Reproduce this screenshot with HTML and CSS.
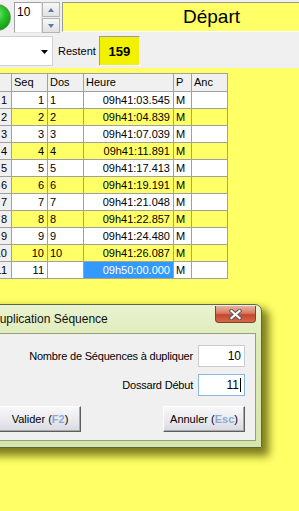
FILE: index.html
```html
<!DOCTYPE html>
<html lang="fr">
<head>
  <meta charset="UTF-8">
  <title>Départ</title>
  <link rel="stylesheet" href="styles.css">
</head>
<body>
  <div class="toolbar">
    <div class="row-top">
      <div class="ball"></div>
      <div class="spin-value">10</div>
      <div class="spin-btns">
        <span class="spin-btn"><svg width="6" height="4" viewBox="0 0 6 4"><polygon points="0,4 3,0 6,4" fill="#5b78a8"/></svg></span>
        <span class="spin-btn"><svg width="6" height="4" viewBox="0 0 6 4"><polygon points="0,0 6,0 3,4" fill="#5b78a8"/></svg></span>
      </div>
      <div class="title-box">Départ</div>
    </div>
    <div class="row-bottom">
      <div class="combo"><svg width="7" height="4" viewBox="0 0 7 4"><polygon points="0,0 7,0 3.5,4" fill="#000"/></svg></div>
      <span class="restent">Restent</span>
      <div class="count">159</div>
    </div>
  </div>

  <div class="panel">
    <div class="grid">
      <div class="cell head"></div>
      <div class="cell head">Seq</div>
      <div class="cell head">Dos</div>
      <div class="cell head">Heure</div>
      <div class="cell head">P</div>
      <div class="cell head">Anc</div>

      <div class="cell rowhead">1</div><div class="cell num">1</div><div class="cell">1</div><div class="cell num">09h41:03.545</div><div class="cell">M</div><div class="cell"></div>
      <div class="cell rowhead">2</div><div class="cell num alt">2</div><div class="cell alt">2</div><div class="cell num alt">09h41:04.839</div><div class="cell alt">M</div><div class="cell alt"></div>
      <div class="cell rowhead">3</div><div class="cell num">3</div><div class="cell">3</div><div class="cell num">09h41:07.039</div><div class="cell">M</div><div class="cell"></div>
      <div class="cell rowhead">4</div><div class="cell num alt">4</div><div class="cell alt">4</div><div class="cell num alt">09h41:11.891</div><div class="cell alt">M</div><div class="cell alt"></div>
      <div class="cell rowhead">5</div><div class="cell num">5</div><div class="cell">5</div><div class="cell num">09h41:17.413</div><div class="cell">M</div><div class="cell"></div>
      <div class="cell rowhead">6</div><div class="cell num alt">6</div><div class="cell alt">6</div><div class="cell num alt">09h41:19.191</div><div class="cell alt">M</div><div class="cell alt"></div>
      <div class="cell rowhead">7</div><div class="cell num">7</div><div class="cell">7</div><div class="cell num">09h41:21.048</div><div class="cell">M</div><div class="cell"></div>
      <div class="cell rowhead">8</div><div class="cell num alt">8</div><div class="cell alt">8</div><div class="cell num alt">09h41:22.857</div><div class="cell alt">M</div><div class="cell alt"></div>
      <div class="cell rowhead">9</div><div class="cell num">9</div><div class="cell">9</div><div class="cell num">09h41:24.480</div><div class="cell">M</div><div class="cell"></div>
      <div class="cell rowhead">10</div><div class="cell num alt">10</div><div class="cell alt">10</div><div class="cell num alt">09h41:26.087</div><div class="cell alt">M</div><div class="cell alt"></div>
      <div class="cell rowhead">11</div><div class="cell num">11</div><div class="cell"></div><div class="cell num selected">09h50:00.000</div><div class="cell">M</div><div class="cell"></div>
    </div>
  </div>

  <div class="dialog">
    <div class="dialog-title">
      <span class="dialog-caption">Duplication Séquence</span>
      <span class="close-btn">
        <svg width="13" height="11" viewBox="0 0 13 11">
          <path d="M2.5 2L10.5 9M10.5 2L2.5 9" stroke="#5a5a5a" stroke-width="4.2" stroke-linecap="square"/>
          <path d="M2.5 2L10.5 9M10.5 2L2.5 9" stroke="#fff" stroke-width="2.2" stroke-linecap="square"/>
        </svg>
      </span>
    </div>
    <div class="dialog-body">
      <div class="field">
        <label>Nombre de Séquences à dupliquer</label>
        <div class="input">10</div>
      </div>
      <div class="field second">
        <label>Dossard Début</label>
        <div class="input focused">11<span class="caret"></span></div>
      </div>
      <div class="buttons">
        <button class="btn">Valider (<b>F2</b>)</button>
        <button class="btn">Annuler (<b>Esc</b>)</button>
      </div>
    </div>
  </div>
</body>
</html>
```

FILE: styles.css
```css
body {
    margin: 0;
    height: 511px;
    overflow: hidden;
    position: relative;
    display: flex;
    flex-direction: column;
    background-color: #f0f0f0;
    font-family: "Liberation Sans", Arial, sans-serif;
    font-size: 11px;
    color: #000;
}

/* top toolbar */
.toolbar {
    height: 68px;
    padding-top: 2px;
    box-sizing: border-box;
    flex-shrink: 0;
}

.row-top {
    display: flex;
    height: 31px;
}

.ball {
    width: 27px;
    height: 27px;
    margin: 2px 3px 0 -16px;
    border-radius: 50%;
    box-sizing: border-box;
    border: 1px solid #5f8d5f;
    background: radial-gradient(circle at 45% 35%, #7ef07e 0%, #2bc42b 40%, #14a014 75%, #0b7d0b 100%);
}

.spin-value {
    width: 28px;
    height: 31px;
    box-sizing: border-box;
    padding: 3px 0 0 2px;
    line-height: 13px;
    font-size: 12px;
    background-color: #fff;
    border: 1px solid;
    border-color: #a0a0a0 #e3e3e3 #e3e3e3 #a0a0a0;
}

.spin-btns {
    display: flex;
    flex-direction: column;
    gap: 1px;
    width: 18px;
}

.spin-btn {
    height: 15px;
    box-sizing: border-box;
    display: flex;
    align-items: center;
    justify-content: center;
    border: 1px solid #b4b4b4;
    background: linear-gradient(#f7f7f7, #e2e2e2);
}

.title-box {
    flex: 1;
    height: 30px;
    margin-left: 2px;
    box-sizing: border-box;
    padding: 1px 0 0 120px;
    line-height: 26px;
    font-size: 19px;
    background-color: #ffff66;
    border-top: 1px solid #9a9a9a;
    border-left: 1px solid #9a9a9a;
    border-bottom: 1px solid #fff;
}

.row-bottom {
    display: flex;
    align-items: center;
    height: 30px;
    margin-top: 3px;
}

.combo {
    width: 73px;
    height: 30px;
    margin-left: -20px;
    box-sizing: border-box;
    display: flex;
    align-items: center;
    justify-content: flex-end;
    padding: 1px 4px 0 0;
    background-color: #fff;
    border: 1px solid #d0d0d0;
}

.restent {
    margin-left: 5px;
    font-size: 11px;
}

.count {
    width: 41px;
    height: 30px;
    margin-left: 3px;
    box-sizing: border-box;
    display: flex;
    align-items: center;
    justify-content: center;
    font-size: 13px;
    font-weight: bold;
    background-color: #f2f200;
    border: 1px solid;
    border-color: #9a9a9a #fff #fff #9a9a9a;
}

/* grid */
.panel {
    flex: 1;
    padding-top: 5px;
    background-color: #ffff66;
}

.grid {
    display: grid;
    grid-template-columns: 22px 35px 35px 89px 17px 35px;
    grid-template-rows: 17px;
    grid-auto-rows: 16px;
    gap: 1px;
    width: max-content;
    margin-left: -12px;
    background-color: #a0a0a0;
    border: 1px solid #a0a0a0;
}

.cell {
    padding: 0 2px;
    line-height: 16px;
    white-space: nowrap;
    overflow: hidden;
    background-color: #fff;
}

.cell.alt {
    background-color: #ffff66;
}

.cell.num {
    text-align: right;
    padding-right: 3px;
}

.cell.head {
    line-height: 17px;
    background-color: #f0f0f0;
}

.cell.rowhead {
    text-align: right;
    padding-right: 4px;
    background-color: #f0f0f0;
}

.cell.selected {
    background-color: #3399ff;
    color: #fff;
}

/* dialog */
.dialog {
    position: absolute;
    left: -19px;
    top: 304px;
    width: 281px;
    box-sizing: border-box;
    padding: 0 5px 6px;
    border: 1px solid #5c6648;
    border-radius: 7px 7px 0 0;
    background: linear-gradient(#e9f2cf, #dceab4 30%, #d6e6a8);
    box-shadow: 5px 6px 9px 2px rgba(70, 70, 0, 0.7);
}

.dialog-title {
    display: flex;
    justify-content: space-between;
    align-items: flex-start;
    height: 28px;
}

.dialog-caption {
    padding: 7px 0 0 4px;
    line-height: 14px;
    font-size: 12px;
    color: #111;
}

.close-btn {
    width: 41px;
    height: 17px;
    margin-top: 1px;
    box-sizing: border-box;
    display: flex;
    align-items: center;
    justify-content: center;
    border: 1px solid #80402f;
    border-top: none;
    border-radius: 0 0 4px 4px;
    background: linear-gradient(#e8b2a2, #d77a62 45%, #c4462d 55%, #d46a4c);
}

.dialog-body {
    height: 108px;
    box-sizing: border-box;
    padding: 11px 10px 0 11px;
    background-color: #f0f0f0;
    border: 1px solid #95a27a;
}

.field {
    display: flex;
    justify-content: flex-end;
    align-items: center;
    gap: 5px;
}

.field.second {
    margin-top: 7px;
}

.field label {
    letter-spacing: -0.2px;
}

.input {
    width: 47px;
    height: 22px;
    box-sizing: border-box;
    padding: 0 3px 0 0;
    line-height: 20px;
    font-size: 12px;
    text-align: right;
    background-color: #fff;
    border: 1px solid #c9ccd2;
}

.input.focused {
    border-color: #8ab6e6;
}

.caret {
    display: inline-block;
    width: 1px;
    height: 14px;
    margin-left: 1px;
    vertical-align: -3px;
    background-color: #000;
}

.buttons {
    display: flex;
    justify-content: space-between;
    margin-top: 10px;
}

.btn {
    width: 82px;
    height: 26px;
    padding: 0;
    font-family: "Liberation Sans", Arial, sans-serif;
    font-size: 11px;
    color: #000;
    border: 1px solid;
    border-color: #fff #5e5e5e #5e5e5e #fff;
    box-shadow: inset -1px -1px 0 #a8a8a8;
    background: linear-gradient(#f8f8fa, #ebebf0 50%, #d9d9e3);
}

.btn b {
    color: #8aaad6;
}
```
